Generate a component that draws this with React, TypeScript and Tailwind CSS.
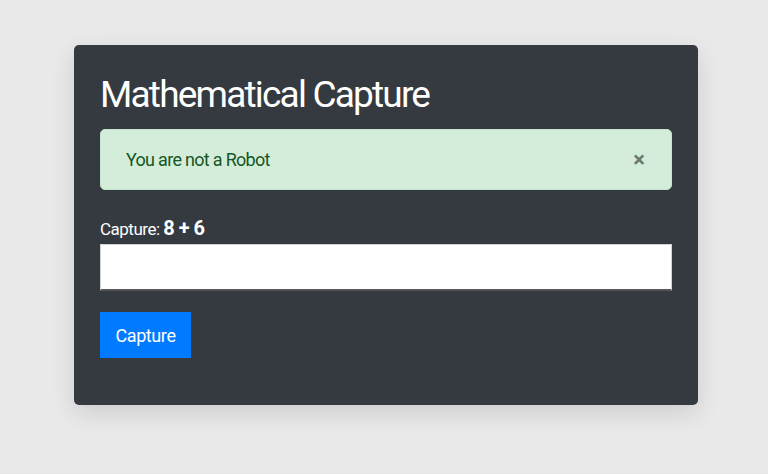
import React from "react";

export default function App() {
  return (
    <div className="min-h-screen w-full bg-[#e9e9e9] pt-[45px] pl-[74px]" style={{ fontFamily: "Roboto, 'Noto Sans', sans-serif" }}>
      <div className="w-[624px] h-[360px] rounded-[5px] bg-[#343a40] px-[26px] pt-[26px] shadow-[0_8px_24px_rgba(0,0,0,0.12)]">
        <h1 className="text-white text-[37px] leading-[48px] tracking-[-1.8px] font-normal">Mathematical Capture</h1>
        <div className="mt-[10px] h-[61px] w-[572px] rounded-[5px] bg-[#d4edda] border border-[#c3e6cb] flex items-center justify-between pl-[25px] pr-[26px]">
          <span className="text-[#155724] text-[18px] tracking-[-0.7px]">You are not a Robot</span>
          <span className="text-[#6b7b6f] text-[22px] font-bold leading-none">×</span>
        </div>
        <div className="mt-[26px] text-white text-[17px] leading-[24px] tracking-[-0.5px]">
          Capture: <span className="font-bold text-[20px]">8 + 6</span>
        </div>
        <div className="mt-[3px] h-[47px] w-[572px] bg-white border border-[#cfd3d6] border-b-2 border-b-[#555]"></div>
        <button className="mt-[21px] h-[46px] w-[91px] bg-[#007bff] text-white text-[18px] tracking-[-0.4px]">Capture</button>
      </div>
    </div>
  );
}
